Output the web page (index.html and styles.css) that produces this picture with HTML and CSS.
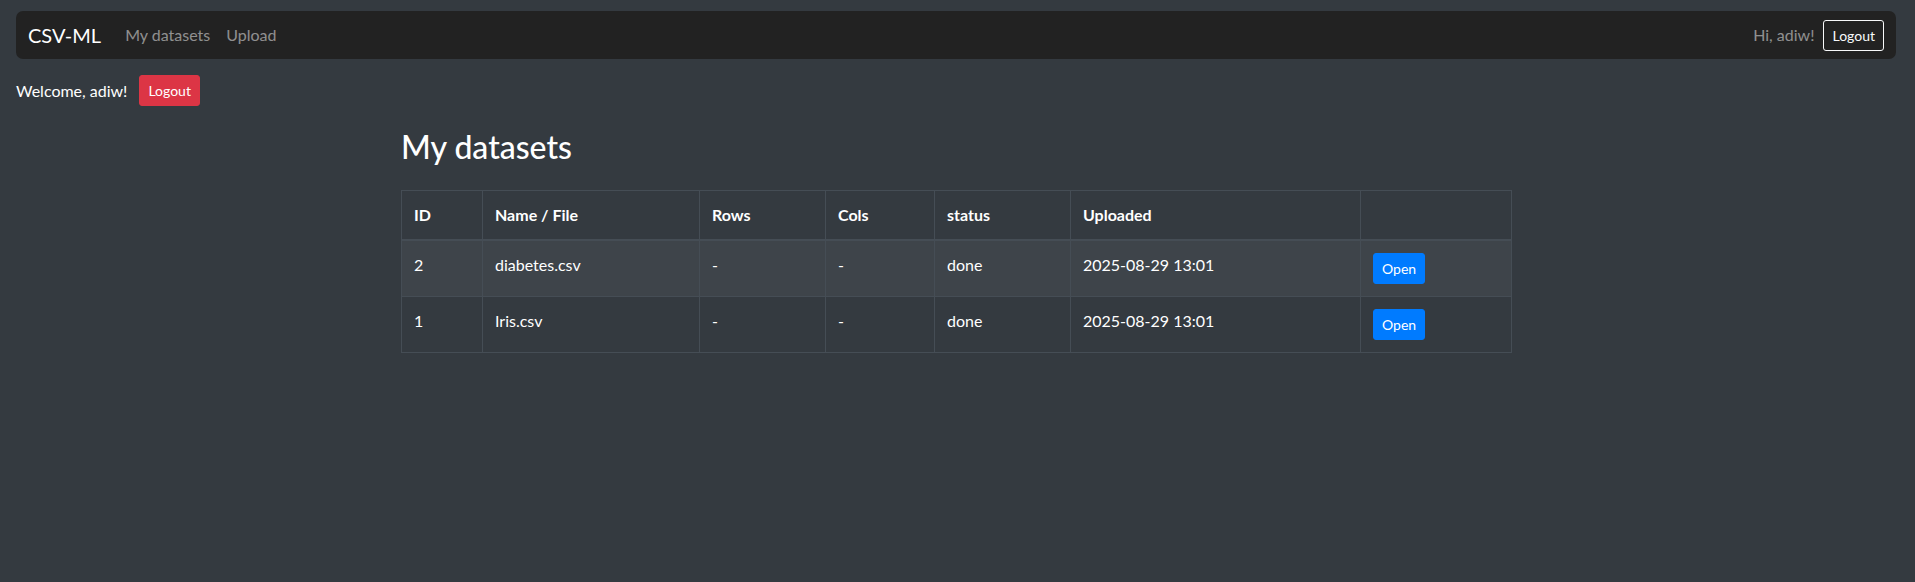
FILE: index.html
```html
<!DOCTYPE html>
<html lang="en">
<head>
<meta charset="utf-8">
<title>CSV-ML</title>
<link rel="stylesheet" href="styles.css">
</head>
<body>
<div class="page">
  <nav class="navbar">
    <a class="brand" href="#">CSV-ML</a>
    <ul class="nav-links">
      <li><a class="nav-link" href="#">My datasets</a></li>
      <li><a class="nav-link" href="#">Upload</a></li>
    </ul>
    <div class="nav-right">
      <span class="nav-user">Hi, adiw!</span>
      <a class="btn btn-sm btn-outline-light" href="#">Logout</a>
    </div>
  </nav>

  <div class="welcome">
    <span>Welcome, adiw!</span>
    <a class="btn btn-sm btn-danger" href="#">Logout</a>
  </div>

  <main class="container">
    <h2 class="title">My datasets</h2>
    <table class="table">
      <colgroup>
        <col class="c-id"><col class="c-name"><col class="c-rows"><col class="c-cols"><col class="c-status"><col class="c-up"><col class="c-act">
      </colgroup>
      <thead>
        <tr><th>ID</th><th>Name / File</th><th>Rows</th><th>Cols</th><th>status</th><th>Uploaded</th><th></th></tr>
      </thead>
      <tbody>
        <tr class="odd">
          <td>2</td><td>diabetes.csv</td><td>-</td><td>-</td><td>done</td><td>2025-08-29 13:01</td>
          <td><a class="btn btn-sm btn-primary" href="#">Open</a></td>
        </tr>
        <tr>
          <td>1</td><td>Iris.csv</td><td>-</td><td>-</td><td>done</td><td>2025-08-29 13:01</td>
          <td><a class="btn btn-sm btn-primary" href="#">Open</a></td>
        </tr>
      </tbody>
    </table>
  </main>
</div>
</body>
</html>
```
FILE: styles.css
```css
* { box-sizing: border-box; }
html, body { margin: 0; padding: 0; }
body {
  background: #343a40;
  color: #fff;
  font-family: Lato, "Open Sans", "Liberation Sans", sans-serif;
  font-size: 16px;
  line-height: 1.5;
}
a { text-decoration: none; }
.page { padding: 11px 19px 0 16px; }

.navbar {
  display: flex;
  align-items: center;
  height: 48px;
  padding: 0 12px;
  background: #222222;
  border-radius: 7px;
}
.brand {
  color: #fff;
  font-size: 20px;
  line-height: 30px;
  margin-right: 16px;
}
.nav-links {
  display: flex;
  list-style: none;
  margin: 0;
  padding: 0;
}
.nav-link {
  display: block;
  padding: 0 8px;
  color: rgba(255,255,255,0.5);
}
.nav-right {
  margin-left: auto;
  display: flex;
  align-items: center;
  gap: 9px;
}
.nav-user { color: rgba(255,255,255,0.5); }

.btn {
  display: inline-block;
  vertical-align: top;
  border: 1px solid transparent;
  border-radius: 3px;
  font-size: 14px;
  line-height: 21px;
  padding: 4px 8px;
  color: #fff;
}
.btn-outline-light { border-color: #f8f9fa; color: #f8f9fa; }
.btn-danger { background: #dc3545; border-color: #dc3545; }
.btn-primary { background: #007bff; border-color: #007bff; }

.welcome {
  display: flex;
  align-items: center;
  gap: 12px;
  margin-top: 16px;
}

.container {
  max-width: 1140px;
  margin: 0 auto;
  padding: 0 15px;
}
.title {
  font-size: 32px;
  font-weight: 500;
  line-height: 38px;
  margin: 22px 0 24px;
}
.table {
  width: 100%;
  border-collapse: collapse;
  table-layout: fixed;
  color: #fff;
}
.c-id { width: 81px; }
.c-name { width: 217px; }
.c-rows { width: 126px; }
.c-cols { width: 109px; }
.c-status { width: 136px; }
.c-up { width: 290px; }
.c-act { width: 151px; }
.table th, .table td {
  border: 1px solid #454d55;
  padding: 12px;
  text-align: left;
  vertical-align: top;
  font-size: 16px;
  line-height: 24px;
}
.table th { font-weight: 700; vertical-align: bottom; border-bottom-width: 2px; }
.table tr.odd { background: #3e444a; }
```
